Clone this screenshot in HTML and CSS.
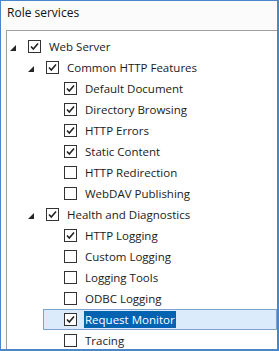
FILE: index.html
```html
<!DOCTYPE html>
<html lang="en">
<head>
    <meta charset="UTF-8">
    <meta name="viewport" content="width=device-width, initial-scale=1.0">
    <title>Role services</title>
    <link rel="stylesheet" href="styles.css">
</head>
<body>
    <div class="window">
        <div class="header">Role services</div>

        <div class="tree">
            <div class="row lvl0">
                <span class="exp"><svg width="6" height="6" viewBox="0 0 6 6"><polygon points="6,0 6,6 0,6" fill="#262626"/></svg></span>
                <span class="cb on"><svg width="13" height="13" viewBox="0 0 13 13"><rect x="0.5" y="0.5" width="12" height="12" fill="#fff" stroke="#333"/><path d="M3 6.5 L5.3 9 L10 3.5" fill="none" stroke="#222" stroke-width="1.6"/></svg></span>
                <span class="label">Web Server</span>
            </div>
            <div class="row lvl1">
                <span class="exp"><svg width="6" height="6" viewBox="0 0 6 6"><polygon points="6,0 6,6 0,6" fill="#262626"/></svg></span>
                <span class="cb on"><svg width="13" height="13" viewBox="0 0 13 13"><rect x="0.5" y="0.5" width="12" height="12" fill="#fff" stroke="#333"/><path d="M3 6.5 L5.3 9 L10 3.5" fill="none" stroke="#222" stroke-width="1.6"/></svg></span>
                <span class="label">Common HTTP Features</span>
            </div>
            <div class="row lvl2">
                <span class="exp"></span>
                <span class="cb on"><svg width="13" height="13" viewBox="0 0 13 13"><rect x="0.5" y="0.5" width="12" height="12" fill="#fff" stroke="#333"/><path d="M3 6.5 L5.3 9 L10 3.5" fill="none" stroke="#222" stroke-width="1.6"/></svg></span>
                <span class="label">Default Document</span>
            </div>
            <div class="row lvl2">
                <span class="exp"></span>
                <span class="cb on"><svg width="13" height="13" viewBox="0 0 13 13"><rect x="0.5" y="0.5" width="12" height="12" fill="#fff" stroke="#333"/><path d="M3 6.5 L5.3 9 L10 3.5" fill="none" stroke="#222" stroke-width="1.6"/></svg></span>
                <span class="label">Directory Browsing</span>
            </div>
            <div class="row lvl2">
                <span class="exp"></span>
                <span class="cb on"><svg width="13" height="13" viewBox="0 0 13 13"><rect x="0.5" y="0.5" width="12" height="12" fill="#fff" stroke="#333"/><path d="M3 6.5 L5.3 9 L10 3.5" fill="none" stroke="#222" stroke-width="1.6"/></svg></span>
                <span class="label">HTTP Errors</span>
            </div>
            <div class="row lvl2">
                <span class="exp"></span>
                <span class="cb on"><svg width="13" height="13" viewBox="0 0 13 13"><rect x="0.5" y="0.5" width="12" height="12" fill="#fff" stroke="#333"/><path d="M3 6.5 L5.3 9 L10 3.5" fill="none" stroke="#222" stroke-width="1.6"/></svg></span>
                <span class="label">Static Content</span>
            </div>
            <div class="row lvl2">
                <span class="exp"></span>
                <span class="cb"><svg width="13" height="13" viewBox="0 0 13 13"><rect x="0.5" y="0.5" width="12" height="12" fill="#fff" stroke="#333"/></svg></span>
                <span class="label">HTTP Redirection</span>
            </div>
            <div class="row lvl2">
                <span class="exp"></span>
                <span class="cb"><svg width="13" height="13" viewBox="0 0 13 13"><rect x="0.5" y="0.5" width="12" height="12" fill="#fff" stroke="#333"/></svg></span>
                <span class="label">WebDAV Publishing</span>
            </div>
            <div class="row lvl1">
                <span class="exp"><svg width="6" height="6" viewBox="0 0 6 6"><polygon points="6,0 6,6 0,6" fill="#262626"/></svg></span>
                <span class="cb on"><svg width="13" height="13" viewBox="0 0 13 13"><rect x="0.5" y="0.5" width="12" height="12" fill="#fff" stroke="#333"/><path d="M3 6.5 L5.3 9 L10 3.5" fill="none" stroke="#222" stroke-width="1.6"/></svg></span>
                <span class="label">Health and Diagnostics</span>
            </div>
            <div class="row lvl2">
                <span class="exp"></span>
                <span class="cb on"><svg width="13" height="13" viewBox="0 0 13 13"><rect x="0.5" y="0.5" width="12" height="12" fill="#fff" stroke="#333"/><path d="M3 6.5 L5.3 9 L10 3.5" fill="none" stroke="#222" stroke-width="1.6"/></svg></span>
                <span class="label">HTTP Logging</span>
            </div>
            <div class="row lvl2">
                <span class="exp"></span>
                <span class="cb"><svg width="13" height="13" viewBox="0 0 13 13"><rect x="0.5" y="0.5" width="12" height="12" fill="#fff" stroke="#333"/></svg></span>
                <span class="label">Custom Logging</span>
            </div>
            <div class="row lvl2">
                <span class="exp"></span>
                <span class="cb"><svg width="13" height="13" viewBox="0 0 13 13"><rect x="0.5" y="0.5" width="12" height="12" fill="#fff" stroke="#333"/></svg></span>
                <span class="label">Logging Tools</span>
            </div>
            <div class="row lvl2">
                <span class="exp"></span>
                <span class="cb"><svg width="13" height="13" viewBox="0 0 13 13"><rect x="0.5" y="0.5" width="12" height="12" fill="#fff" stroke="#333"/></svg></span>
                <span class="label">ODBC Logging</span>
            </div>
            <div class="row lvl2 selected">
                <span class="exp"></span>
                <span class="cb on"><svg width="13" height="13" viewBox="0 0 13 13"><rect x="0.5" y="0.5" width="12" height="12" fill="#fff" stroke="#333"/><path d="M3 6.5 L5.3 9 L10 3.5" fill="none" stroke="#222" stroke-width="1.6"/></svg></span>
                <span class="label">Request Monitor</span>
            </div>
            <div class="row lvl2">
                <span class="exp"></span>
                <span class="cb"><svg width="13" height="13" viewBox="0 0 13 13"><rect x="0.5" y="0.5" width="12" height="12" fill="#fff" stroke="#333"/></svg></span>
                <span class="label">Tracing</span>
            </div>
        </div>
    </div>
</body>
</html>
```

FILE: styles.css
```css
html, body {
    margin: 0;
    padding: 0;
}
body {
    font-family: 'Open Sans', 'Noto Sans', sans-serif;
    font-size: 11.5px;
    color: #1a1a1a;
    background: #fff;
}
.window {
    box-sizing: border-box;
    width: 279px;
    height: 351px;
    border-style: solid;
    border-color: #4a86c8;
    border-width: 1px 2px 2px 1px;
    background: #fbfbfb;
    overflow: hidden;
    display: flex;
    flex-direction: column;
}
.header {
    height: 29px;
    padding-left: 6px;
    line-height: 23px;
    color: #111;
    font-size: 12px;
}
.tree {
    flex: 1;
    margin-left: 5px;
    border-top: 1px solid #a0a0a0;
    border-left: 1px solid #a0a0a0;
    background: #fff;
    padding-top: 5px;
    overflow: hidden;
}
.row {
    box-sizing: border-box;
    height: 21px;
    display: flex;
    align-items: center;
    border: 1px solid transparent;
    white-space: nowrap;
}
.lvl0 { margin-left: 0; }
.lvl1 { margin-left: 18px; }
.lvl2 { margin-left: 36px; }
.exp {
    width: 20px;
    height: 19px;
    display: flex;
    align-items: center;
    padding-left: 2px;
    box-sizing: border-box;
}
.exp svg {
    margin-top: 3px;
}
.cb {
    width: 13px;
    height: 13px;
    margin-right: 7px;
}
.cb svg {
    display: block;
}
.label {
    padding: 0 1px;
    line-height: 17px;
}
.selected {
    background: #dcebfc;
    border-color: #7da2ce;
}
.selected .label {
    background: #0063b1;
    color: #fff;
}
```
